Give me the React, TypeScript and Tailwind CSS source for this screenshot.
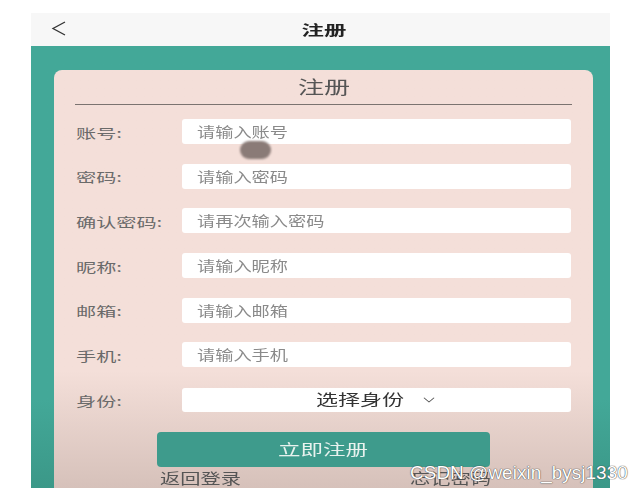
import { ChevronDown } from 'lucide-react';

const fields = [
  { label: '账号:', placeholder: '请输入账号' },
  { label: '密码:', placeholder: '请输入密码' },
  { label: '确认密码:', placeholder: '请再次输入密码' },
  { label: '昵称:', placeholder: '请输入昵称' },
  { label: '邮箱:', placeholder: '请输入邮箱' },
  { label: '手机:', placeholder: '请输入手机' },
];

const cjk = "font-['Noto_Sans_CJK_SC','Noto_Sans',sans-serif]";

// the page is shown stretched sideways, so the CJK text is widened with scale-x
export default function App() {
  return (
    <div className={`relative w-[642px] h-[495px] bg-white overflow-hidden ${cjk}`}>
      <div className="ml-[31px] pt-[13px] w-[579px] h-[488px] flex flex-col">
        <header className="relative h-[33px] shrink-0 bg-[#f7f7f7] flex items-center justify-center pb-[2px]">
          <svg className="absolute left-[19px] top-[7px]" width="18" height="18" viewBox="0 0 18 18">
            <polyline points="15,2 3,8.5 15,15" fill="none" stroke="#333" strokeWidth="1.3" />
          </svg>
          <h1 className="ml-[7px] inline-block scale-x-[1.6] text-[14px] font-bold text-[#222] leading-none">注册</h1>
        </header>

        <main className="flex-1 bg-gradient-to-b from-[#43a898] from-80% to-[#3b9888] pt-[24px] pl-[23px] overflow-hidden">
          <div className="w-[539px] h-full rounded-t-[8px] bg-gradient-to-b from-[#f4dfd9] from-72% to-[#d6c1ba] px-[21px] flex flex-col">
            <div className="h-[34px] shrink-0 flex items-end justify-center leading-none pb-[9px]">
              <span className="inline-block scale-x-[1.45] text-[18px] text-[#555]">注册</span>
            </div>
            <div className="h-px bg-[#7b7370] shrink-0" />

            <div className="mt-[14px] flex flex-col gap-[19.7px]">
              {fields.map((f) => (
                <div key={f.label} className="flex items-center h-[25px]">
                  <span className="w-[107px] pl-px leading-none">
                    <span className="inline-block origin-left scale-x-[1.55] -translate-y-[1.5px] whitespace-nowrap text-[13px] text-[#6a6a6a]">{f.label}</span>
                  </span>
                  <div className="w-[389px] h-[25px] bg-white rounded-[3px] flex items-center pl-[15px]">
                    <span className="inline-block origin-left scale-x-[1.3] whitespace-nowrap text-[14px] text-[#8a8a8a]">{f.placeholder}</span>
                  </div>
                </div>
              ))}
              <div className="flex items-center h-[25px]">
                <span className="w-[107px] pl-px leading-none">
                  <span className="inline-block origin-left scale-x-[1.55] -translate-y-[1.5px] text-[13px] text-[#6a6a6a]">身份:</span>
                </span>
                <div className="w-[389px] h-[24px] bg-white rounded-[3px] flex items-center justify-center gap-[16px]">
                  <span className="w-[88px] flex justify-center">
                    <span className="inline-block scale-x-[1.47] whitespace-nowrap text-[15px] text-[#333]">选择身份</span>
                  </span>
                  <ChevronDown size={16} strokeWidth={1.3} className="text-[#555] scale-x-[1.2]" />
                </div>
              </div>
            </div>

            <button className="mt-[20px] ml-[82px] w-[333px] h-[35px] shrink-0 rounded-[4px] bg-[#3e9b8c] flex items-center justify-center">
              <span className="inline-block scale-x-[1.5] text-[15px] text-[#e8f2ee]">立即注册</span>
            </button>

            <div className="mt-[3px] flex text-[15px] text-[#555] leading-none">
              <span className="ml-[85px] w-[250px]">
                <span className="inline-block origin-left scale-x-[1.35]">返回登录</span>
              </span>
              <span>
                <span className="inline-block origin-left scale-x-[1.35]">忘记密码</span>
              </span>
            </div>
          </div>
        </main>
      </div>

      <div className="absolute left-[240px] top-[141px] w-[31px] h-[18px] rounded-full bg-[#8a7b77] blur-[1px]" />

      <div className="absolute left-[410px] top-[463px] text-[19px] leading-none text-white font-['Liberation_Sans',sans-serif] [text-shadow:0_0_1px_#444,0_0_1px_#444]">
        CSDN @weixin_bysj1330
      </div>
    </div>
  );
}
